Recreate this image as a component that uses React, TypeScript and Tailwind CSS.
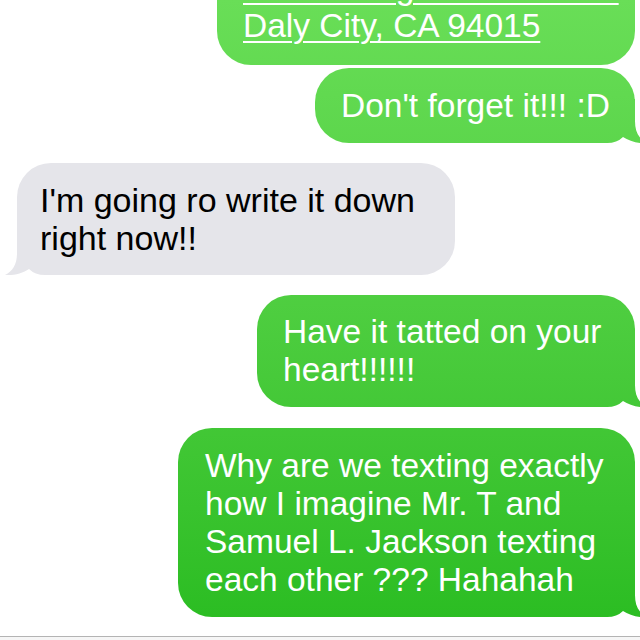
import React from "react";

const green =
  "bg-fixed bg-linear-to-b from-[#69de57] to-[#28bc20]";
const tailClip =
  "[clip-path:path('M38_0_L38_22_C38_33_42_40_50_44_C42_45_32_42_26_38_Q20_44_10_44_L0_44_L0_0_Z')]";

function Tail({ side, color }: { side: "left" | "right"; color: string }) {
  if (side === "right") {
    return (
      <div
        className={`absolute right-[-12px] bottom-0 w-[50px] h-[44px] ${color} ${tailClip}`}
      />
    );
  }
  return (
    <div
      className={`absolute left-[-12px] bottom-0 w-[50px] h-[44px] -scale-x-100 ${color} ${tailClip}`}
    />
  );
}

export default function App() {
  return (
    <div
      className="w-[640px] h-[640px] overflow-hidden bg-white flex flex-col text-[33.5px] leading-[38px]"
      style={{ fontFamily: '"Liberation Sans", Arial, sans-serif' }}
    >
      {/* Bubble 1 */}
      <div
        className={`relative self-end mr-[5px] mt-[-49px] w-[418px] rounded-[34px] pl-[26px] pt-[18px] pb-[20px] text-white whitespace-nowrap ${green}`}
      >
        <div className="underline decoration-[2px] underline-offset-[4px]">
          400 Southgate Ave. #202
        </div>
        <div className="underline decoration-[2px] underline-offset-[4px]">
          Daly City, CA 94015
        </div>
      </div>

      {/* Bubble 2 */}
      <div
        className={`relative self-end mr-[5px] mt-[3px] w-[320px] rounded-[34px] pl-[26px] py-[18.5px] text-white whitespace-nowrap ${green}`}
      >
        <Tail side="right" color={green} />
        <div className="relative">Don't forget it!!! :D</div>
      </div>

      {/* Gray bubble */}
      <div className="relative self-start ml-[17px] mt-[20px] w-[438px] rounded-[34px] pl-[23px] py-[18px] text-[34px] text-black whitespace-nowrap bg-[#e5e5ea]">
        <Tail side="left" color="bg-[#e5e5ea]" />
        <div className="relative">
          I'm going ro write it down
          <br />
          right now!!
        </div>
      </div>

      {/* Bubble 3 */}
      <div
        className={`relative self-end mr-[5px] mt-[20px] w-[378px] rounded-[34px] pl-[26px] py-[18px] text-white whitespace-nowrap ${green}`}
      >
        <Tail side="right" color={green} />
        <div className="relative">
          Have it tatted on your
          <br />
          heart!!!!!!
        </div>
      </div>

      {/* Bubble 4 */}
      <div
        className={`relative self-end mr-[5px] mt-[21px] w-[457px] rounded-[34px] pl-[27px] py-[18.5px] text-white whitespace-nowrap ${green}`}
      >
        <Tail side="right" color={green} />
        <div className="relative">
          Why are we texting exactly
          <br />
          how I imagine Mr. T and
          <br />
          Samuel L. Jackson texting
          <br />
          each other ??? Hahahah
        </div>
      </div>

      <div className="mt-auto h-[4px] border-t border-[#b4b4b4] bg-[#f6f6f6]" />
    </div>
  );
}
